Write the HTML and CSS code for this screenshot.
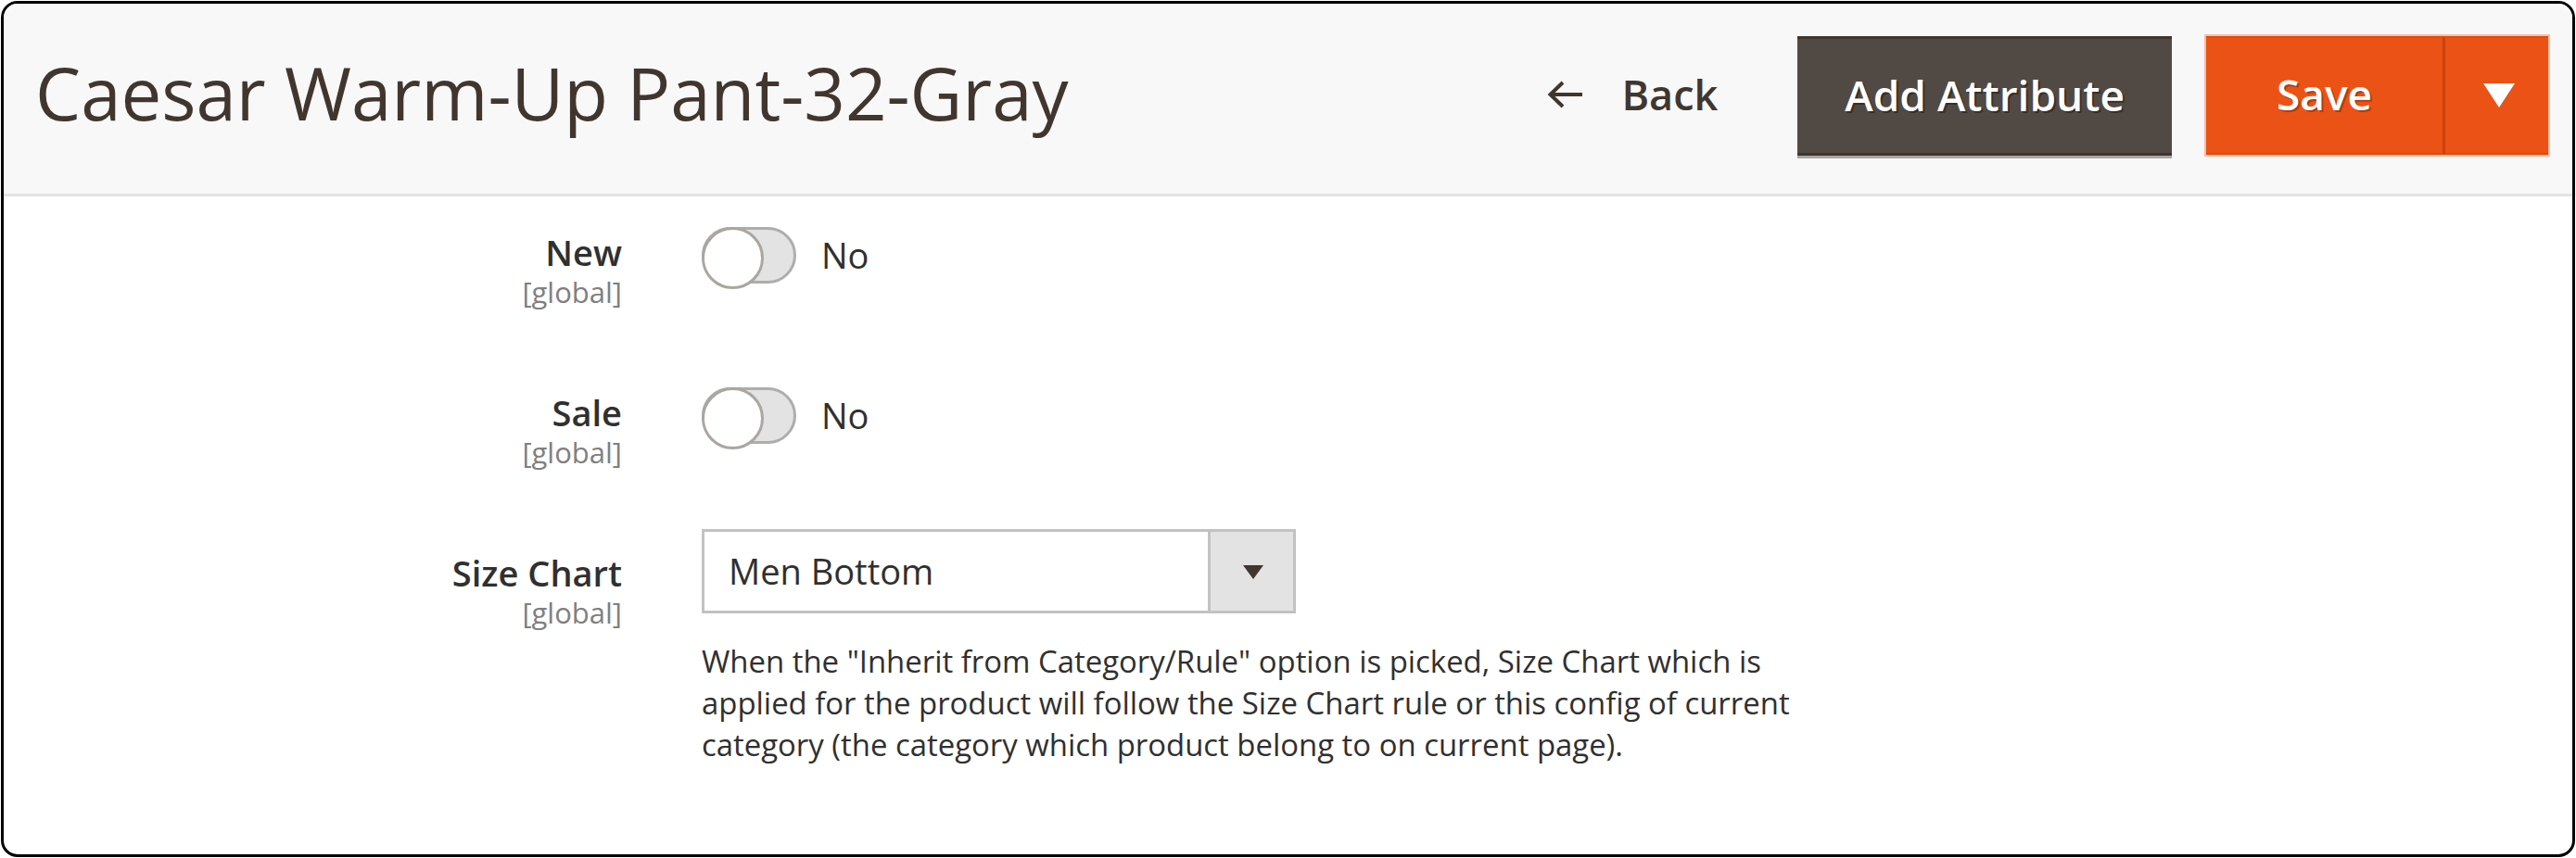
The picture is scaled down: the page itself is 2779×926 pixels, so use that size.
FILE: index.html
```html
<!DOCTYPE html>
<html lang="en">
<head>
<meta charset="utf-8">
<title>Caesar Warm-Up Pant-32-Gray</title>
<link rel="stylesheet" href="styles.css">
</head>
<body>
<div class="frame">
  <header class="page-header">
    <h1 class="page-title">Caesar Warm-Up Pant-32-Gray</h1>
    <div class="actions">
      <button class="btn-back" type="button">
        <svg class="back-arrow" viewBox="0 0 40 32" width="40" height="32" aria-hidden="true">
          <path d="M39 16H5 M18 3 L4.5 16 L18 29" fill="none" stroke="#41362f" stroke-width="4"/>
        </svg>
        <span>Back</span>
      </button>
      <button class="btn-secondary" type="button">Add Attribute</button>
      <div class="split">
        <button class="btn-primary" type="button">Save</button>
        <button class="btn-toggle" type="button" aria-label="More save options"><span class="tri-white"></span></button>
      </div>
    </div>
  </header>

  <main class="form">
    <div class="field">
      <div class="field-label">
        <div class="label">New</div>
        <div class="scope">[global]</div>
      </div>
      <div class="field-control switch-control">
        <span class="switch"></span>
        <span class="switch-text">No</span>
      </div>
    </div>

    <div class="field">
      <div class="field-label">
        <div class="label">Sale</div>
        <div class="scope">[global]</div>
      </div>
      <div class="field-control switch-control">
        <span class="switch"></span>
        <span class="switch-text">No</span>
      </div>
    </div>

    <div class="field field-select">
      <div class="field-label">
        <div class="label">Size Chart</div>
        <div class="scope">[global]</div>
      </div>
      <div class="field-control">
        <div class="select">
          <span class="select-value">Men Bottom</span>
          <span class="select-arrow"><span class="tri-dark"></span></span>
        </div>
        <p class="note">When the "Inherit from Category/Rule" option is picked, Size Chart which is applied for the product will follow the Size Chart rule or this config of current category (the category which product belong to on current page).</p>
      </div>
    </div>
  </main>
</div>
</body>
</html>
```

FILE: styles.css
```css
* { box-sizing: border-box; }

html, body {
  margin: 0;
  padding: 0;
  background: #ffffff;
  font-family: "Open Sans", "Noto Sans", sans-serif;
}

.frame {
  margin: 1px;
  height: 924px;
  border: 3px solid #000;
  border-radius: 18px;
  overflow: hidden;
  background: #fff;
}

/* Header */
.page-header {
  display: flex;
  align-items: flex-start;
  height: 208px;
  padding: 35px 26px 0 34px;
  background: #f8f8f8;
  border-bottom: 3px solid #e3e3e3;
}

.page-title {
  margin: 22px 0 0 0;
  font-size: 78px;
  line-height: 78px;
  font-weight: 400;
  color: #41362f;
  letter-spacing: 0;
  white-space: nowrap;
}

.actions {
  margin-left: auto;
  display: flex;
  align-items: flex-start;
}

button {
  font-family: inherit;
  cursor: pointer;
}

.btn-back {
  display: flex;
  align-items: center;
  height: 129px;
  padding: 0 0 4px 0;
  border: 0;
  background: transparent;
  color: #41362f;
  font-size: 45px;
  font-weight: 600;
}

.back-arrow {
  width: 40px;
  height: 32px;
  margin-right: 41px;
}

.btn-secondary {
  margin-left: 86px;
  height: 129px;
  padding: 0 51px 4px;
  border: 0;
  border-top: 3px solid #3f352f;
  border-bottom: 3px solid #3f352f;
  box-shadow: 0 3px 0 #aaa6a3;
  background: #514943;
  color: #fff;
  font-size: 46px;
  font-weight: 600;
  text-shadow: 2px 2px 0 rgba(0, 0, 0, 0.35);
}

.split {
  display: flex;
  margin-left: 37px;
  box-shadow: 0 0 0 2px rgba(240, 120, 80, 0.45);
}

.btn-primary {
  height: 128px;
  width: 255px;
  padding: 0 0 4px;
  border: 0;
  border-top: 2px solid #e64a02;
  border-bottom: 2px solid #e04a02;
  background: #eb5215;
  color: #fff;
  font-size: 46px;
  font-weight: 600;
  text-shadow: 2px 2px 0 rgba(0, 0, 0, 0.25);
}

.btn-toggle {
  height: 128px;
  width: 114px;
  padding: 0;
  border: 0;
  border-left: 3px solid #c8450d;
  border-top: 2px solid #e64a02;
  border-bottom: 2px solid #e04a02;
  background: #eb5215;
  display: flex;
  align-items: center;
  justify-content: center;
}

.tri-white {
  display: block;
  width: 0;
  height: 0;
  margin-left: 4px;
  border-left: 17px solid transparent;
  border-right: 17px solid transparent;
  border-top: 26px solid #fff;
}

/* Form */
.form {
  padding-top: 13px;
}

.field {
  display: grid;
  grid-template-columns: 667px auto;
  column-gap: 86px;
  margin-bottom: 67px;
}

.field-label {
  padding-top: 20px;
  text-align: right;
}

.label {
  font-size: 38px;
  line-height: 55px;
  font-weight: 600;
  color: #303030;
}

.scope {
  font-size: 31px;
  line-height: 31px;
  color: #808080;
}

.switch-control {
  display: flex;
  align-items: center;
  align-self: start;
  margin-top: 20px;
  height: 61px;
}

.switch {
  position: relative;
  display: block;
  width: 102px;
  height: 61px;
  border: 3px solid #adadad;
  border-radius: 31px;
  background: #e3e3e3;
}

.switch::after {
  content: "";
  position: absolute;
  left: -3px;
  top: -3px;
  width: 61px;
  height: 61px;
  border: 3px solid #aaa6a0;
  border-radius: 50%;
  background: #fff;
}

.switch-text {
  margin-left: 27px;
  font-size: 38px;
  color: #303030;
  padding-bottom: 2px;
}

.select {
  display: flex;
  width: 641px;
  height: 91px;
  border: 3px solid #c2c2c2;
  background: #fff;
}

.select-value {
  flex: 1;
  padding-left: 26px;
  font-size: 38px;
  line-height: 85px;
  color: #303030;
}

.select-arrow {
  width: 92px;
  border-left: 3px solid #c2c2c2;
  background: #e3e3e3;
  display: flex;
  align-items: center;
  justify-content: center;
}

.tri-dark {
  display: block;
  width: 0;
  height: 0;
  margin-left: 2px;
  margin-top: 2px;
  border-left: 11px solid transparent;
  border-right: 11px solid transparent;
  border-top: 15px solid #41362f;
}

.note {
  width: 1195px;
  margin: 29px 0 0 0;
  font-size: 32.9px;
  line-height: 45px;
  color: #303030;
}
```
